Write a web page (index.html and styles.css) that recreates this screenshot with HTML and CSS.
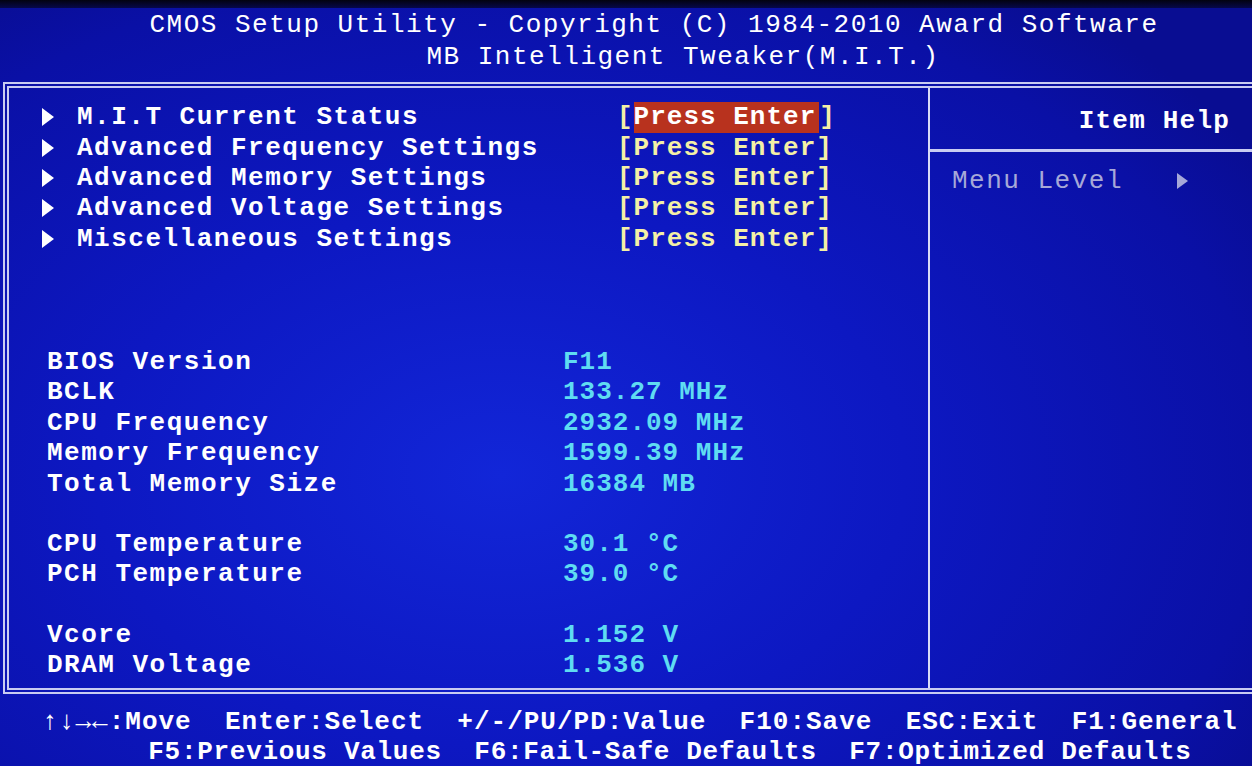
FILE: index.html
```html
<!DOCTYPE html>
<html lang="en">
<head>
    <meta charset="UTF-8">
    <meta name="viewport" content="width=device-width, initial-scale=1.0">
    <title>CMOS Setup Utility - MB Intelligent Tweaker</title>
    <link rel="stylesheet" href="styles.css">
</head>
<body>
    <div class="screen">
        <div class="bezel"></div>

        <header class="title">
            <div class="title-line title-main">CMOS Setup Utility - Copyright (C) 1984-2010 Award Software</div>
            <div class="title-line title-sub">MB Intelligent Tweaker(M.I.T.)</div>
        </header>

        <main class="frame">
            <section class="panel">
                <ul class="menu">
                    <li class="menu-row">
                        <span class="arrow"></span>
                        <span class="menu-label">M.I.T Current Status</span>
                        <span class="enter">[<span class="enter-text selected">Press Enter</span>]</span>
                    </li>
                    <li class="menu-row">
                        <span class="arrow"></span>
                        <span class="menu-label">Advanced Frequency Settings</span>
                        <span class="enter">[<span class="enter-text">Press Enter</span>]</span>
                    </li>
                    <li class="menu-row">
                        <span class="arrow"></span>
                        <span class="menu-label">Advanced Memory Settings</span>
                        <span class="enter">[<span class="enter-text">Press Enter</span>]</span>
                    </li>
                    <li class="menu-row">
                        <span class="arrow"></span>
                        <span class="menu-label">Advanced Voltage Settings</span>
                        <span class="enter">[<span class="enter-text">Press Enter</span>]</span>
                    </li>
                    <li class="menu-row">
                        <span class="arrow"></span>
                        <span class="menu-label">Miscellaneous Settings</span>
                        <span class="enter">[<span class="enter-text">Press Enter</span>]</span>
                    </li>
                </ul>

                <div class="status">
                    <dl class="status-group">
                        <dt>BIOS Version</dt><dd>F11</dd>
                        <dt>BCLK</dt><dd>133.27 MHz</dd>
                        <dt>CPU Frequency</dt><dd>2932.09 MHz</dd>
                        <dt>Memory Frequency</dt><dd>1599.39 MHz</dd>
                        <dt>Total Memory Size</dt><dd>16384 MB</dd>
                    </dl>
                    <dl class="status-group">
                        <dt>CPU Temperature</dt><dd>30.1 °C</dd>
                        <dt>PCH Temperature</dt><dd>39.0 °C</dd>
                    </dl>
                    <dl class="status-group">
                        <dt>Vcore</dt><dd>1.152 V</dd>
                        <dt>DRAM Voltage</dt><dd>1.536 V</dd>
                    </dl>
                </div>
            </section>

            <aside class="help">
                <div class="help-title">Item Help</div>
                <div class="help-body">
                    <span class="help-text">Menu Level</span>
                    <span class="arrow arrow-dim"></span>
                </div>
            </aside>
        </main>

        <footer class="keys">
            <div class="keys-line">↑↓→←:Move  Enter:Select  +/-/PU/PD:Value  F10:Save  ESC:Exit  F1:General</div>
            <div class="keys-line keys-second">F5:Previous Values  F6:Fail-Safe Defaults  F7:Optimized Defaults</div>
        </footer>
    </div>
</body>
</html>
```

FILE: styles.css
```css
body {
    margin: 0;
    padding: 0;
    background: #0a0f9a;
    overflow: hidden;
}

.screen {
    width: 1252px;
    height: 766px;
    font-family: "Liberation Mono", "DejaVu Sans Mono", monospace;
    font-size: 26px;
    letter-spacing: 1.5px;
    color: #ffffff;
    background: radial-gradient(ellipse 900px 600px at 40% 62%, #1226d8 0%, #0d18c2 45%, #0a10a6 85%, #090d92 100%);
    overflow: hidden;
}

.bezel {
    height: 8px;
    background: linear-gradient(to bottom, #020210, #06084a);
}

/* Title block */
.title {
    height: 74px;
    padding-top: 1px;
    padding-left: 56px;
    box-sizing: border-box;
    text-align: center;
}

.title-line {
    line-height: 32px;
    white-space: pre;
}

.title-sub {
    padding-left: 58px;
}

/* Main frame with double border */
.frame {
    height: 612px;
    box-sizing: border-box;
    margin-left: 3px;
    border-top: 6px double #c9ccf2;
    border-left: 6px double #c9ccf2;
    border-bottom: 6px double #c9ccf2;
    display: grid;
    grid-template-columns: 921px 1fr;
    grid-template-rows: 100%;
    overflow: hidden;
}

.panel {
    border-right: 2px solid #d8dbf6;
    padding-top: 14px;
}

.menu {
    list-style: none;
    margin: 0;
    padding: 0 0 0 33px;
}

.menu-row {
    display: grid;
    grid-template-columns: 35px 540px auto;
    align-items: center;
    height: 30.4px;
    font-weight: bold;
}

.arrow {
    width: 0;
    height: 0;
    border-top: 9px solid transparent;
    border-bottom: 9px solid transparent;
    border-left: 12px solid #ffffff;
}

.menu-label {
    white-space: pre;
}

.enter {
    color: #f4f0a6;
    white-space: pre;
    letter-spacing: 1px;
}

.enter-text.selected {
    background: #b8321e;
    color: #ffffff;
    padding: 0 3px 1px 0;
}

/* Status readouts */
.status {
    margin-top: 93px;
    padding-left: 38px;
}

.status-group {
    display: grid;
    grid-template-columns: 516px auto;
    margin: 0 0 30px;
}

.status-group:last-child {
    margin-bottom: 0;
}

.status-group dt,
.status-group dd {
    margin: 0;
    height: 30.4px;
    line-height: 30.4px;
    font-weight: bold;
    white-space: pre;
}

.status-group dt {
    color: #ffffff;
}

.status-group dd {
    color: #5fdcf2;
    letter-spacing: 1px;
}

/* Help column */
.help-title {
    height: 64px;
    box-sizing: border-box;
    border-bottom: 3px solid #c9ccf2;
    text-align: right;
    padding-right: 22px;
    padding-top: 17px;
    line-height: 32px;
    font-weight: bold;
    letter-spacing: 1.2px;
}

.help-body {
    display: flex;
    align-items: center;
    padding-left: 22px;
    margin-top: 14px;
    height: 30px;
    color: #a6a8d8;
}

.help-text {
    white-space: pre;
    width: 225px;
}

.arrow-dim {
    border-top-width: 8px;
    border-bottom-width: 8px;
    border-left: 11px solid #a6a8d8;
}

/* Key legend */
.keys {
    padding-top: 13px;
    text-align: center;
    font-weight: bold;
    letter-spacing: 1px;
}

.keys-line {
    line-height: 30px;
    white-space: pre;
    padding-left: 28px;
}

.keys-second {
    padding-left: 88px;
    letter-spacing: 0.7px;
}
```
